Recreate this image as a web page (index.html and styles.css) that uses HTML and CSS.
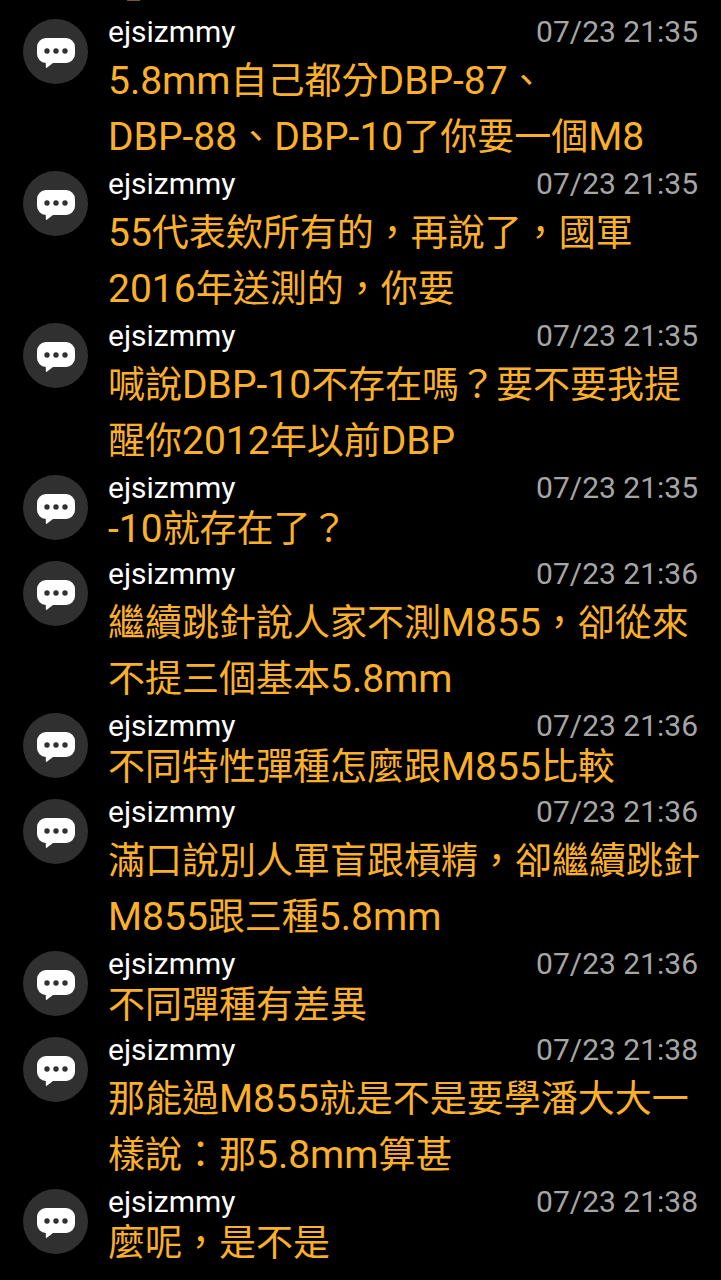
FILE: index.html
```html
<!DOCTYPE html>
<html lang="zh-Hant">
<head>
<meta charset="utf-8">
<meta name="viewport" content="width=device-width, initial-scale=1">
<title>留言</title>
<link rel="stylesheet" href="styles.css">
</head>
<body>
<svg class="sprite" aria-hidden="true">
<symbol id="bubble" viewBox="0 0 38 30"><path fill="#fff" d="M9 0h20a9 9 0 0 1 9 9v7a9 9 0 0 1-9 9H16l-6.200 4.700q-1 .6-1-.6V25A9 9 0 0 1 0 16V9a9 9 0 0 1 9-9z"/><g fill="#303030"><circle cx="10" cy="13" r="2.700"/><circle cx="19" cy="13" r="2.700"/><circle cx="28" cy="13" r="2.700"/></g></symbol>
</svg>
<main class="comments">
<article class="comment"><span class="avatar"><svg class="icon"><use href="#bubble"/></svg></span><div class="content"><header class="meta"><span class="name">ejsizmmy</span><time class="time">07/23 21:35</time></header><p class="text"><span class="latin">5.8mm</span>自己都分<span class="latin">DBP-87</span>、<br><span class="latin">DBP-88</span>、<span class="latin">DBP-10</span>了你要一個<span class="latin">M8</span></p></div></article>
<article class="comment"><span class="avatar"><svg class="icon"><use href="#bubble"/></svg></span><div class="content"><header class="meta"><span class="name">ejsizmmy</span><time class="time">07/23 21:35</time></header><p class="text"><span class="latin">55</span>代表欸所有的，再說了，國軍<br><span class="latin">2016</span>年送測的，你要</p></div></article>
<article class="comment"><span class="avatar"><svg class="icon"><use href="#bubble"/></svg></span><div class="content"><header class="meta"><span class="name">ejsizmmy</span><time class="time">07/23 21:35</time></header><p class="text">喊說<span class="latin">DBP-10</span>不存在嗎？要不要我提<br>醒你<span class="latin">2012</span>年以前<span class="latin">DBP</span></p></div></article>
<article class="comment"><span class="avatar"><svg class="icon"><use href="#bubble"/></svg></span><div class="content"><header class="meta"><span class="name">ejsizmmy</span><time class="time">07/23 21:35</time></header><p class="text single"><span class="latin">-10</span>就存在了？</p></div></article>
<article class="comment"><span class="avatar"><svg class="icon"><use href="#bubble"/></svg></span><div class="content"><header class="meta"><span class="name">ejsizmmy</span><time class="time">07/23 21:36</time></header><p class="text">繼續跳針說人家不測<span class="latin">M855</span>，卻從來<br>不提三個基本<span class="latin">5.8mm</span></p></div></article>
<article class="comment"><span class="avatar"><svg class="icon"><use href="#bubble"/></svg></span><div class="content"><header class="meta"><span class="name">ejsizmmy</span><time class="time">07/23 21:36</time></header><p class="text single">不同特性彈種怎麼跟<span class="latin">M855</span>比較</p></div></article>
<article class="comment"><span class="avatar"><svg class="icon"><use href="#bubble"/></svg></span><div class="content"><header class="meta"><span class="name">ejsizmmy</span><time class="time">07/23 21:36</time></header><p class="text">滿口說別人軍盲跟槓精，卻繼續跳針<br><span class="latin">M855</span>跟三種<span class="latin">5.8mm</span></p></div></article>
<article class="comment"><span class="avatar"><svg class="icon"><use href="#bubble"/></svg></span><div class="content"><header class="meta"><span class="name">ejsizmmy</span><time class="time">07/23 21:36</time></header><p class="text single">不同彈種有差異</p></div></article>
<article class="comment"><span class="avatar"><svg class="icon"><use href="#bubble"/></svg></span><div class="content"><header class="meta"><span class="name">ejsizmmy</span><time class="time">07/23 21:38</time></header><p class="text">那能過<span class="latin">M855</span>就是不是要學潘大大一<br>樣說：那<span class="latin">5.8mm</span>算甚</p></div></article>
<article class="comment"><span class="avatar"><svg class="icon"><use href="#bubble"/></svg></span><div class="content"><header class="meta"><span class="name">ejsizmmy</span><time class="time">07/23 21:38</time></header><p class="text single">麼呢，是不是</p></div></article>
</main>
</body>
</html>
```
FILE: styles.css
```css
body {
  margin: 0;
  background: #000;
  font-family: Roboto, "Noto Sans CJK TC", sans-serif;
}
.sprite {
  position: absolute;
  width: 0;
  height: 0;
}
.comments {
  padding: 14px 15px 0 23px;
}
.comments::before {
  content: "";
  position: absolute;
  top: 0;
  left: 127px;
  width: 13px;
  height: 1px;
  background: #7d5716;
}
.comment {
  display: flex;
  align-items: flex-start;
  gap: 20px;
}
.avatar {
  display: flex;
  flex: none;
  align-items: center;
  justify-content: center;
  width: 65px;
  height: 65px;
  margin-top: 5px;
  border-radius: 50%;
  background: #303030;
}
.icon {
  width: 38px;
  height: 30px;
  margin-top: 2px;
}
.content {
  flex: 1;
  min-width: 0;
}
.meta {
  display: flex;
  justify-content: space-between;
  padding-right: 8px;
  line-height: 36px;
  font-size: 30px;
}
.name {
  color: #fff;
}
.time {
  color: #a6a6a6;
}
.text {
  margin: 0;
  padding: 4px 0 0;
  color: #fbb02a;
  font-size: 37px;
  line-height: 56px;
}
.single {
  padding: 2px 0 4px;
  line-height: 44px;
}
.latin {
  font-size: 39px;
  line-height: 1;
}
```
